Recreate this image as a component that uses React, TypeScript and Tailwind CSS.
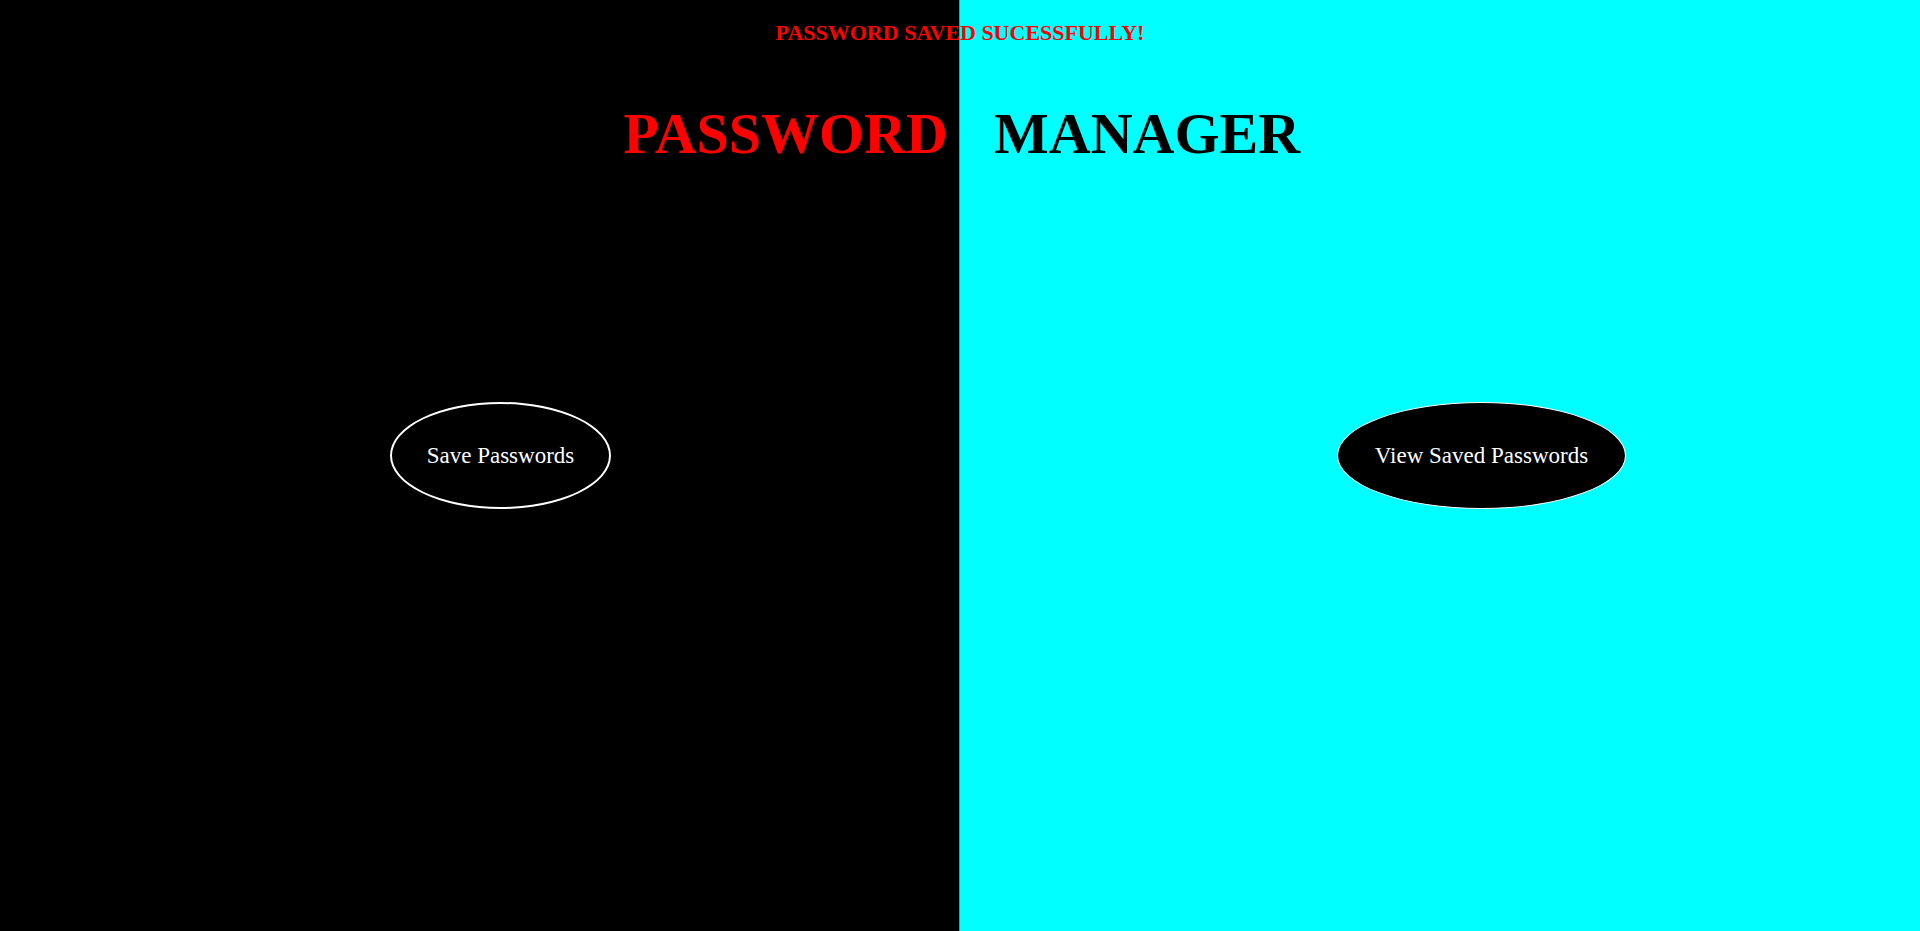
import React from 'react';

const App: React.FC = () => {
  return (
    <div className="relative flex h-[931px] w-full overflow-hidden font-['Liberation_Serif','Times_New_Roman',serif]">
      {/* Status message */}
      <div className="absolute left-0 right-0 top-[22px] text-center text-[22px] font-bold leading-none text-[#ff0000]">
        PASSWORD SAVED SUCESSFULLY!
      </div>

      {/* Left half */}
      <div className="flex w-[960px] flex-col border-r border-[#808080] bg-black">
        <h1 className="pr-[11px] pt-[105px] text-right text-[58px] font-bold leading-none text-[#ff0000]">
          PASSWORD
        </h1>
        <button className="ml-[390px] mt-[239px] flex h-[107px] w-[221px] items-center justify-center rounded-[50%] border-2 border-white bg-black pt-[2px] text-[23px] text-white">
          Save Passwords
        </button>
      </div>

      {/* Right half */}
      <div className="flex flex-1 flex-col bg-[#00ffff]">
        <h1 className="pl-[34px] pt-[105px] text-left text-[58px] font-bold leading-none text-black">
          MANAGER
        </h1>
        <button className="ml-[377px] mt-[239px] flex h-[107px] w-[289px] items-center justify-center rounded-[50%] border border-white bg-black pt-[2px] text-[23px] text-white">
          View Saved Passwords
        </button>
      </div>
    </div>
  );
};

export default App;
